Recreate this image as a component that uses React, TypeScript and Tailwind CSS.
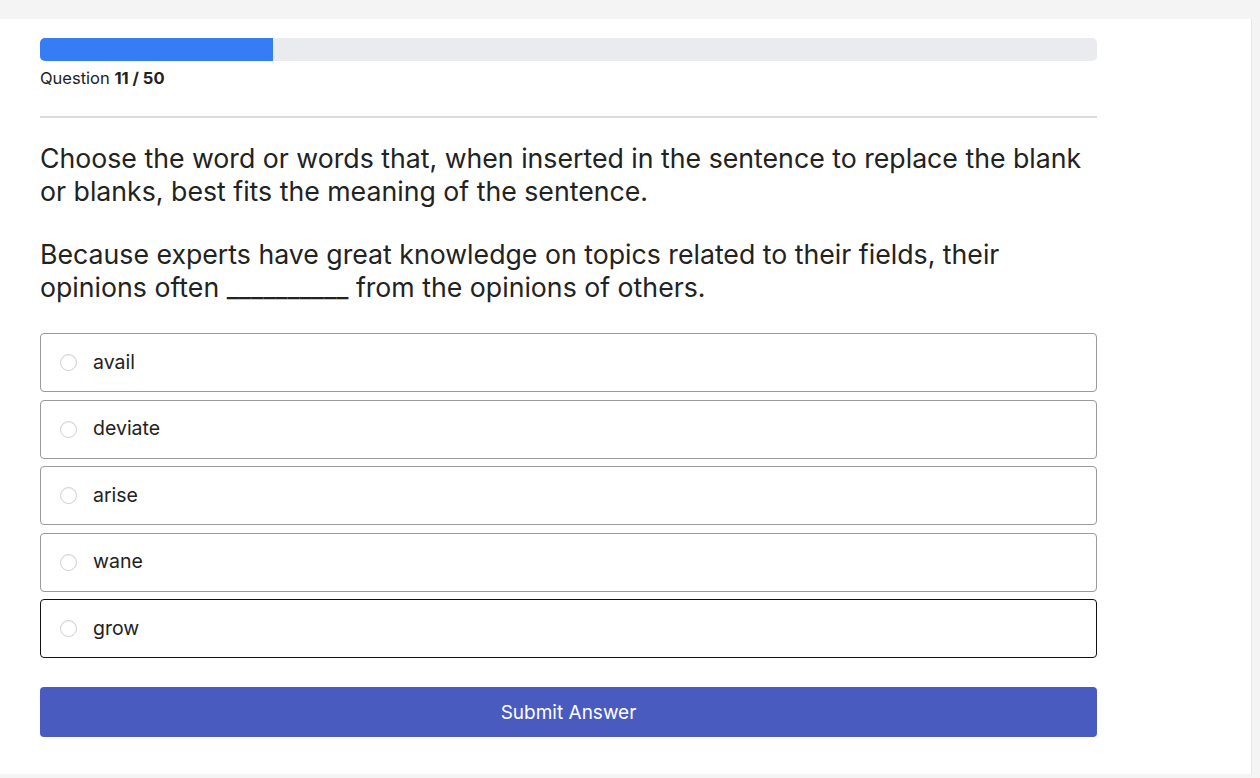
const options = ["avail", "deviate", "arise", "wane", "grow"];

export default function App() {
  return (
    <div className="min-h-[778px] bg-[#f4f4f4] pt-[19px] pr-[8px] pb-[4px] font-['Inter',sans-serif] text-[#222]">
      <div className="h-[755px] bg-white border-r border-[#e6e6e6]">
        <div className="w-[1057px] ml-10 pt-[19px]">
          <div className="h-[23px] rounded-[5px] bg-[#e9ebee] overflow-hidden">
            <div className="h-full bg-[#357cf5]" style={{ width: `${(11 / 50) * 100}%` }} />
          </div>
          <p className="mt-[7px] text-[16.5px] leading-[20px]">
            Question <span className="font-bold">11 / 50</span>
          </p>
          <div className="mt-[28px] h-[2px] bg-[#dcdcdc]" />

          <div className="mt-[24px] text-[26.7px] leading-[33px]">
            <p>
              Choose the word or words that, when inserted in the sentence to replace the blank or
              blanks, best fits the meaning of the sentence.
            </p>
            <p className="mt-[30px]">
              Because experts have great knowledge on topics related to their fields, their opinions
              often __________ from the opinions of others.
            </p>
          </div>

          <div className="mt-[29px] flex flex-col gap-[7.5px]">
            {options.map((o, i) => (
              <label
                key={o}
                className={
                  i === options.length - 1
                    ? "flex items-center h-[59px] rounded-[4px] border border-[#111] pl-[19px]"
                    : "flex items-center h-[59px] rounded-[4px] border border-[#9a9a9a] pl-[19px]"
                }
              >
                <span className="w-[17px] h-[17px] rounded-full border border-[#cfcfcf] bg-white shadow-[inset_0_1px_1px_rgba(0,0,0,0.06)]" />
                <span className="ml-[16px] text-[19.5px]">{o}</span>
              </label>
            ))}
          </div>

          <button className="mt-[29px] w-full h-[50px] rounded-[4px] bg-[#4a5bbf] pt-[2px] text-white text-[19px]">
            Submit Answer
          </button>
        </div>
      </div>
    </div>
  );
}
